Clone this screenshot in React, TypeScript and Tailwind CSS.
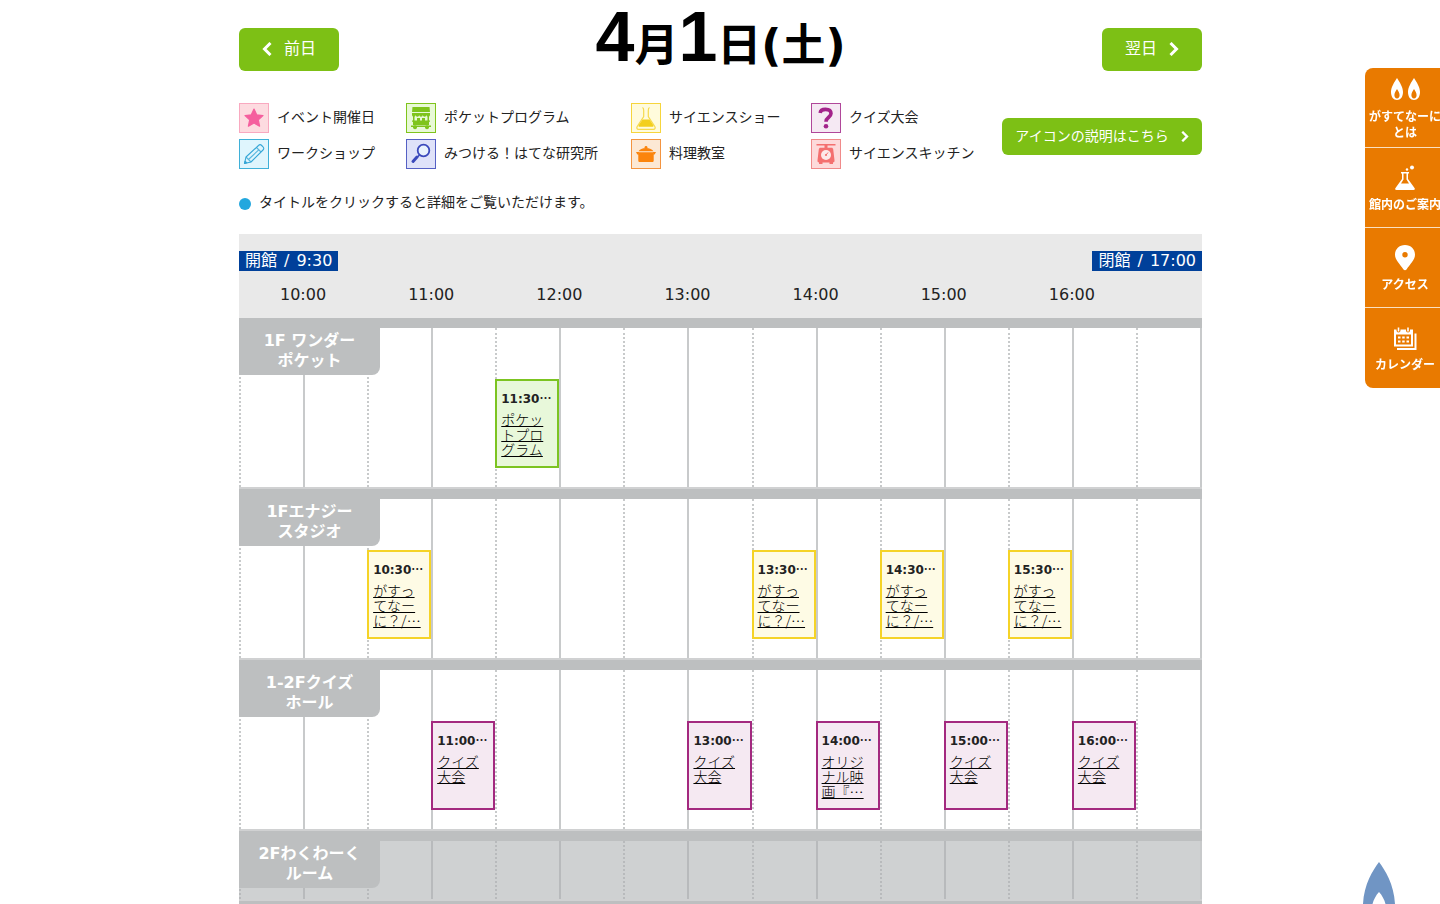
const arrLegend = [
    {icon: "star", label: "イベント開催日", box: "border-[#f9a9c0] bg-[#fddbe0] text-[#f55f9e]"},
    {icon: "stall", label: "ポケットプログラム", box: "border-[#7fc41c] bg-[#e8f9d6] text-[#7fc41c]"},
    {icon: "flask", label: "サイエンスショー", box: "border-[#f6d53c] bg-[#fffbdc] text-[#f3cf1d]"},
    {icon: "question", label: "クイズ大会", box: "border-[#b0479a] bg-[#f5e9f3] text-[#a3238a]"},
    {icon: "pencil", label: "ワークショップ", box: "border-[#3fb0d8] bg-[#dff5fd] text-[#35a6d6]"},
    {icon: "search", label: "みつける！はてな研究所", box: "border-[#5560c4] bg-[#dfe2f9] text-[#3b49bb]"},
    {icon: "pot", label: "料理教室", box: "border-[#f39440] bg-[#fce8d4] text-[#fb840c]"},
    {icon: "scale", label: "サイエンスキッチン", box: "border-[#f08a8a] bg-[#fddada] text-[#f4706f]"}
]

const arrHours = ["10:00", "11:00", "12:00", "13:00", "14:00", "15:00", "16:00"]

const green = "border-[#7cc421] bg-[#e8f8da]"
const yellow = "border-[#f5d327] bg-[#fefbe5]"
const purple = "border-[#a3297f] bg-[#f5e9f2]"

// slot = number of half hours since 9:30
const arrRooms = [
    {name: ["1F ワンダー", "ポケット"], closed: false, events: [
        {slot: 4, time: "11:30", title: "ポケットプログラム", color: green}
    ]},
    {name: ["1Fエナジー", "スタジオ"], closed: false, events: [
        {slot: 2, time: "10:30", title: "がすってなーに？/…", color: yellow},
        {slot: 8, time: "13:30", title: "がすってなーに？/…", color: yellow},
        {slot: 10, time: "14:30", title: "がすってなーに？/…", color: yellow},
        {slot: 12, time: "15:30", title: "がすってなーに？/…", color: yellow}
    ]},
    {name: ["1-2Fクイズ", "ホール"], closed: false, events: [
        {slot: 3, time: "11:00", title: "クイズ大会", color: purple},
        {slot: 7, time: "13:00", title: "クイズ大会", color: purple},
        {slot: 9, time: "14:00", title: "オリジナル映画『…", color: purple},
        {slot: 11, time: "15:00", title: "クイズ大会", color: purple},
        {slot: 13, time: "16:00", title: "クイズ大会", color: purple}
    ]},
    {name: ["2Fわくわーく", "ルーム"], closed: true, events: []}
]

const arrSide = [
    {icon: "flames", lines: ["がすてなーに", "とは"]},
    {icon: "lab", lines: ["館内のご案内"]},
    {icon: "pin", lines: ["アクセス"]},
    {icon: "calendar", lines: ["カレンダー"]}
]

function Chevron({ left, small }: { left?: boolean, small?: boolean }) {
    return (
        <svg viewBox="0 0 10 14" className={small ? "h-[11px] w-2" : "h-3.5 w-2.5"} fill="none" stroke="currentColor" strokeWidth="3" aria-hidden="true">
            <path d={left ? "M8.500 1L2.500 7l6 6" : "M1.500 1l6 6-6 6"}/>
        </svg>
    );
}

function LegendIcon({ name }: { name: string }) {
    return (
        <svg viewBox="0 0 28 28" className="h-7 w-7" fill="currentColor" aria-hidden="true">
            {name === "star" &&
                <path d="M14 5l2.700 5.800 6.300.8-4.700 4.300 1.300 6.300L14 19l-5.600 3.200 1.300-6.300L5 11.600l6.300-.8z" stroke="currentColor" strokeWidth="1.200" strokeLinejoin="round"/>
            }
            {name === "stall" &&
                <>
                    <path d="M5.500 3h17l.5 5H5z"/>
                    <path d="M5 9h18v2a1.800 1.800 0 0 1-3.600 0a1.800 1.800 0 0 1-3.600 0a1.800 1.800 0 0 1-3.600 0a1.800 1.800 0 0 1-3.600 0a1.800 1.800 0 0 1-3.600 0z"/>
                    <path d="M6 12h1.500v4.500H6zM20.500 12H22v4.500h-1.500zM10 14h3v2.500h-3zM15 14h3v2.500h-3zM5 16.500h18v1.200H5zM6 17.500h16V21H6zM4 21.500h20V23H4z"/>
                    <circle cx="8" cy="23.200" r="2"/>
                    <circle cx="20" cy="23.200" r="2"/>
                </>
            }
            {name === "flask" &&
                <>
                    <path d="M10.500 3.500c1 .5 1.200 1.500 1.200 3v6L5.200 22.500c-.8 1.500-.3 2.800 1.300 2.800h15c1.600 0 2.100-1.300 1.300-2.800L16.300 12.500v-6c0-1.500.2-2.500 1.200-3" fill="none" stroke="currentColor" strokeWidth="1.200" opacity=".75"/>
                    <path d="M10.500 15.500h7l3.700 5.500c.6 1 .3 1.800-.8 1.800H7.600c-1.100 0-1.400-.8-.8-1.800z"/>
                </>
            }
            {name === "question" &&
                <>
                    <path d="M8.200 9c.2-2.500 2.500-3.600 5.300-3.600 3.200 0 5.500 1.500 5.500 4.200 0 3.800-5 3.600-5 8.200" fill="none" stroke="currentColor" strokeWidth="3.600"/>
                    <circle cx="14" cy="22.300" r="2.300"/>
                </>
            }
            {name === "pencil" &&
                <g fill="none" stroke="currentColor" strokeWidth="1.100" strokeLinejoin="round">
                    <path d="M4.500 23.500l1.500-6.500L18.500 5.500c1-1 2.200-1 3.200 0l1.300 1.300c1 1 1 2.200 0 3.200L11 22z"/>
                    <path d="M6 17l5 5M16.500 7.500l4.500 4.500M8.500 19.500L19 9.700" opacity=".8"/>
                    <path d="M4.500 23.500l.6-2.300 1.700 1.600z" fill="currentColor"/>
                </g>
            }
            {name === "search" &&
                <>
                    <circle cx="16.500" cy="10.500" r="5.800" fill="#e9f2fd" stroke="currentColor" strokeWidth="1.800"/>
                    <path d="M12.500 15l-2 2" stroke="currentColor" strokeWidth="1.600"/>
                    <path d="M10 17l-4 4.500" stroke="currentColor" strokeWidth="3" strokeLinecap="round"/>
                </>
            }
            {name === "pot" &&
                <>
                    <circle cx="14" cy="7.300" r="1.400"/>
                    <path d="M6.500 11.300c1-1.900 4-3.200 7.500-3.200s6.500 1.300 7.500 3.200zM6.300 12.200h15.400V20.500c0 1-.6 1.500-1.500 1.500H7.800c-.9 0-1.500-.5-1.500-1.500z"/>
                    <path d="M6.500 15l-1.300-.8L4 12h3zM21.500 15l1.300-.8L24 12h-3z"/>
                </>
            }
            {name === "scale" &&
                <>
                    <path d="M4.500 4h19v1.600h-19zM12.500 5h3v3h-3z"/>
                    <path d="M8.500 7.800h11c1 0 1.500.6 1.700 1.500l1.300 11c.2 1.400-.5 2.200-1.700 2.200H7.200c-1.200 0-1.900-.8-1.700-2.200l1.300-11c.2-.9.700-1.500 1.700-1.500zM7 22h3.500v2H7zM17.500 22H21v2h-3.500z"/>
                    <circle cx="14" cy="15" r="5" fill="#fde9e9"/>
                    <path d="M14 15l2-2.500" stroke="currentColor" strokeWidth="1"/>
                    <circle cx="14" cy="15" r="1.100"/>
                </>
            }
        </svg>
    );
}

function SideIcon({ name }: { name: string }) {
    return (
        <svg viewBox="0 0 30 28" className="h-7 w-[30px]" fill="currentColor" aria-hidden="true">
            {name === "flames" &&
                <path fillRule="evenodd" d="M7 2c2.500 4 6 9 6 14 0 5-2.500 8-6 8s-6-3-6-8c0-5 3.500-10 6-14zM7 13c-1.600 2.200-2.600 4.500-2.600 6.300S5.500 22.500 7 22.500s2.600-1.400 2.600-3.200S8.600 15.200 7 13zM24 2c2.500 4 6 9 6 14 0 5-2.500 8-6 8s-6-3-6-8c0-5 3.500-10 6-14zM24 13c-1.600 2.200-2.600 4.500-2.600 6.300s1.100 3.200 2.600 3.200 2.600-1.400 2.600-3.200S25.600 15.200 24 13z"/>
            }
            {name === "lab" &&
                <>
                    <path fillRule="evenodd" d="M11 8h8v1.500h-1V15l6.500 9c.8 1.200.2 2-1 2h-17c-1.200 0-1.800-.8-1-2L12 15V9.500h-1zM13.500 9.500v6L11 19.500h8l-2.500-4v-6z"/>
                    <circle cx="17" cy="5.500" r="1.200"/>
                    <circle cx="22" cy="3.500" r="2"/>
                </>
            }
            {name === "pin" &&
                <path fillRule="evenodd" d="M15 1c5.800 0 10 4.200 10 9.700C25 16 20 20 16.500 25.500c-.8 1-2.200 1-3 0C10 20 5 16 5 10.700 5 5.200 9.200 1 15 1zM15 8a2.700 2.700 0 1 0 0 5.400a2.700 2.700 0 0 0 0-5.400z"/>
            }
            {name === "calendar" &&
                <g transform="translate(0 1.500)">
                    <path fillRule="evenodd" d="M4 4h2.500v1a2 2 0 0 0 4 0V4h5.500v1a2 2 0 0 0 4 0V4H23v17H4zM6 9v10h15V9z"/>
                    <path d="M7.700 2h1.600v4H7.700zM17.200 2h1.600v4h-1.600zM8 11h2.500v2H8zM12.200 11h2.500v2h-2.500zM16.500 11H19v2h-2.500zM8 15h2.500v2H8zM12.200 15h2.500v2h-2.500zM16.500 15H19v2h-2.500z"/>
                    <path d="M25.500 8v15.500H7" fill="none" stroke="currentColor" strokeWidth="2"/>
                </g>
            }
        </svg>
    );
}

function Room({ room }: { room: typeof arrRooms[number] }) {
    return (
        <section>
            <div className="h-[10px] bg-[#bdbfc0]"></div>
            <div className={`border-b-2 border-[#d0d1d2] ${room.closed ? "h-[60px] bg-[#cfd1d2]" : "h-[161px] bg-white"}`}>
                <div className="grid h-full grid-cols-15 border-r-2 border-[#c8cacb]">
                    {Array.from({ length: 15 }, (_, index) => (
                        <div
                            key={index}
                            style={{ gridColumn: index + 1 }}
                            className={`row-start-1 h-full border-l-2 ${room.closed ? "border-[#b8babc]" : "border-[#c8cacb]"} ${index % 2 ? "border-solid" : "border-dotted"}`}
                        ></div>
                    ))}
                    <h2 className="z-10 col-span-full col-start-1 row-start-1 h-[47px] w-[141px] rounded-br-lg bg-[#bdbfc0] pt-[3px] text-center text-base leading-5 font-bold text-white">
                        {room.name[0]}<br/>{room.name[1]}
                    </h2>
                    {room.events.map((event) => (
                        <div
                            key={event.slot}
                            style={{ gridColumn: event.slot + 1 }}
                            className={`z-10 row-start-1 mt-[51px] h-[89px] border-2 pt-2 pl-1 ${event.color}`}
                        >
                            <p className="text-xs leading-[18px] font-bold whitespace-nowrap text-[#222]">{event.time}<span className="font-['Noto_Sans_CJK_JP',sans-serif]">…</span></p>
                            <a href="#" className="mt-1 block w-[50px] font-['Noto_Sans_CJK_JP',sans-serif] text-sm leading-[15px] font-light text-black underline">{event.title}</a>
                        </div>
                    ))}
                </div>
            </div>
        </section>
    );
}

export default function App() {
    return (
        <div lang="ja" className="bg-white font-['DejaVu_Sans','Noto_Sans_CJK_JP',sans-serif] text-[#222]">
            <main className="pl-px">
                <div className="mx-auto w-full max-w-[963px]">
                    <header className="flex h-[98px] flex-row items-center justify-between">
                        <button type="button" className="flex h-[43px] w-[100px] flex-row items-center justify-center gap-3 rounded-md bg-[#7dc015] text-base text-white">
                            <Chevron left/>前日
                        </button>
                        <h1 className="flex flex-row items-baseline pb-6 text-[44px] leading-none font-bold text-black">
                            <span className="font-['Liberation_Sans',sans-serif] text-[70px]">4</span>月
                            <span className="font-['Liberation_Sans',sans-serif] text-[70px]">1</span>日(土)
                        </h1>
                        <button type="button" className="flex h-[43px] w-[100px] flex-row items-center justify-center gap-3 rounded-md bg-[#7dc015] text-base text-white">
                            翌日<Chevron/>
                        </button>
                    </header>
                    <div className="flex flex-row items-center justify-between pt-[5px]">
                        <ul className="grid grid-cols-[167px_225px_180px_auto] gap-y-1.5">
                            {arrLegend.map((item) => (
                                <li key={item.label} className="flex flex-row gap-2 text-sm leading-7">
                                    <span className={`h-[30px] w-[30px] border ${item.box}`}><LegendIcon name={item.icon}/></span>
                                    {item.label}
                                </li>
                            ))}
                        </ul>
                        <a href="#" className="flex h-[37px] w-[200px] flex-row items-center justify-center gap-3 rounded-md bg-[#7dc015] text-sm text-white">
                            アイコンの説明はこちら<Chevron small/>
                        </a>
                    </div>
                    <p className="mt-[22px] flex h-[22px] flex-row items-center gap-2 text-sm">
                        <span className="mt-1 h-3 w-3 rounded-full bg-[#22a7de]"></span>
                        タイトルをクリックすると詳細をご覧いただけます。
                    </p>
                    <div className="mt-[21px]">
                        <div className="h-[84px] bg-[#e9e9e9] pt-[17px]">
                            <div className="flex flex-row justify-between text-base leading-5 text-white">
                                <p className="flex flex-row gap-[7px] bg-[#00409a] px-1.5"><span>開館</span><span>/</span><span>9:30</span></p>
                                <p className="flex flex-row gap-[7px] bg-[#00409a] px-1.5"><span>閉館</span><span>/</span><span>17:00</span></p>
                            </div>
                            <div className="mt-3 grid grid-cols-15 pr-0.5 text-center text-base leading-6">
                                {arrHours.map((hour) => <span key={hour} className="col-span-2">{hour}</span>)}
                            </div>
                        </div>
                        {arrRooms.map((room) => <Room key={room.name[0]} room={room}/>)}
                        <div className="h-[3px] bg-[#bdbfc0]"></div>
                    </div>
                </div>
            </main>
            <nav className="fixed top-[68px] -right-[5px] w-20 overflow-hidden rounded-l-lg font-['Noto_Sans_CJK_JP',sans-serif]">
                {arrSide.map((item, index) => (
                    <a key={item.icon} href="#" className={`flex h-20 flex-col items-center bg-[#e97a00] text-xs leading-4 font-bold whitespace-nowrap text-white ${index < 3 ? "border-b border-[#fbe0c0]" : ""} ${index === 0 ? "pt-2" : "pt-4"}`}>
                        <SideIcon name={item.icon}/>
                        <span className="mt-1 text-center">
                            {item.lines.map((line) => <span key={line} className="block">{line}</span>)}
                        </span>
                    </a>
                ))}
            </nav>
            <a href="#" aria-label="ページの先頭へ" className="fixed right-11 bottom-0">
                <svg viewBox="0 0 34 42" className="h-[42px] w-[34px]">
                    <path d="M17 0c6 8 15 22 16 42h-9.500c-1-4-3.500-9-6.500-12-3 3-5.500 8-6.500 12H1C2 22 11 8 17 0z" fill="#7095c4"/>
                </svg>
            </a>
        </div>
    );
}
